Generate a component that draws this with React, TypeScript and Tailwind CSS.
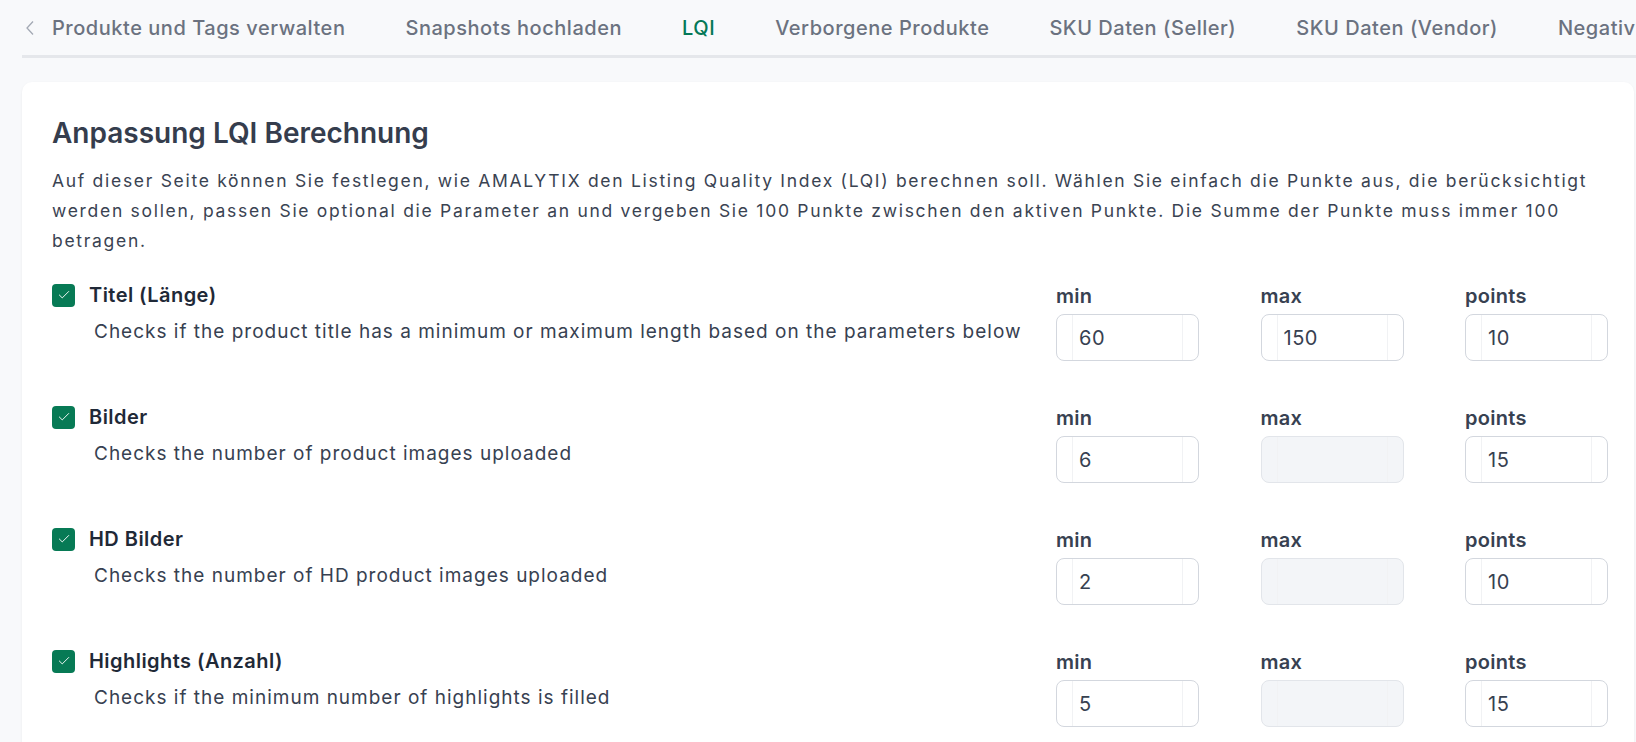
import {Check} from "lucide-react";

const tabs = [
  "Produkte und Tags verwalten",
  "Snapshots hochladen",
  "LQI",
  "Verborgene Produkte",
  "SKU Daten (Seller)",
  "SKU Daten (Vendor)",
  "Negativ Keywords",
];

const rules = [
  {
    title: "Titel (Länge)",
    text: "Checks if the product title has a minimum or maximum length based on the parameters below",
    min: "60",
    max: "150",
    points: "10",
  },
  {title: "Bilder", text: "Checks the number of product images uploaded", min: "6", max: null, points: "15"},
  {title: "HD Bilder", text: "Checks the number of HD product images uploaded", min: "2", max: null, points: "10"},
  {title: "Highlights (Anzahl)", text: "Checks if the minimum number of highlights is filled", min: "5", max: null, points: "15"},
];

const NumberField = ({label, value, disabled}: {label: string; value: string | null; disabled?: boolean}) => {
  return (
    <div className="flex flex-col w-[143px]">
      <p className="text-[20px] leading-[24px] font-semibold tracking-[0.3px] text-[#374151]">{label}</p>
      <div
        className={
          disabled
            ? "mt-[6px] flex h-[47px] rounded-[8px] border border-[#e2e5ea] bg-[#f3f5f8]"
            : "mt-[6px] flex h-[47px] rounded-[8px] border border-[#d3d7de] bg-white"
        }
      >
        <div className="w-[15px]" />
        <div className="flex-1 flex items-center pl-[6px] border-x border-[#f1f2f4] text-[20px] tracking-[0.5px] text-[#374151]">
          {value}
        </div>
        <div className="w-[15px]" />
      </div>
    </div>
  );
};

export default function App() {
  return (
    <div className="min-h-screen bg-[#f8f9fb] font-['Inter',sans-serif] pl-[22px] overflow-hidden">
      <div className="flex h-[58px] border-b-[3px] border-[#e5e7eb] whitespace-nowrap overflow-hidden">
        <div className="flex items-center pl-[4px] pr-[18px] text-[#a3a9b4]">
          <svg width="8" height="14" viewBox="0 0 8 14" fill="none">
            <polyline points="7,0.5 1,7 7,13.5" stroke="currentColor" strokeWidth="1.3" />
          </svg>
        </div>
        <div className="flex gap-[60px]">
          {tabs.map((tab) => (
            <div
              key={tab}
              className={
                tab === "LQI"
                  ? "flex items-center -mb-[3px] border-b-[3px] border-[#047857] text-[20px] tracking-[0.53px] font-medium text-[#047857]"
                  : "flex items-center text-[20px] tracking-[0.53px] font-medium text-[#6b7280]"
              }
            >
              {tab}
            </div>
          ))}
        </div>
      </div>

      <div className="mt-[24px] mr-[2px] bg-white rounded-[10px] shadow-[0_1px_3px_rgba(16,24,40,0.06)] pl-[30px] pr-[26px] pt-[33px] pb-[40px]">
        <h1 className="text-[28px] leading-[36px] font-semibold text-[#353d4d]">Anpassung LQI Berechnung</h1>
        <p className="mt-[15px] -mr-[20px] text-[17.5px] leading-[30px] tracking-[1.7px] text-[#3a4352]">
          Auf dieser Seite können Sie festlegen, wie AMALYTIX den Listing Quality Index (LQI) berechnen soll. Wählen Sie
          einfach die Punkte aus, die berücksichtigt
          <br />
          werden sollen, passen Sie optional die Parameter an und vergeben Sie 100 Punkte zwischen den aktiven Punkte. Die
          Summe der Punkte muss immer 100
          <br />
          betragen.
        </p>

        <div className="mt-[27px] flex flex-col gap-[44px]">
          {rules.map((rule) => (
            <div key={rule.title} className="flex flex-row">
              <div className="flex-1 flex flex-col">
                <div className="flex flex-row items-center gap-[14px] h-[24px]">
                  <div className="flex items-center justify-center w-[23px] h-[23px] rounded-[4px] bg-[#077a55]">
                    <Check size={14} strokeWidth={1.6} className="text-white" />
                  </div>
                  <p className="text-[20px] leading-[24px] font-semibold tracking-[0.45px] text-[#1f2937]">{rule.title}</p>
                </div>
                <p className="mt-[11px] pl-[42px] text-[19px] leading-[28px] tracking-[1px] text-[#374151]">{rule.text}</p>
              </div>
              <div className="flex flex-row gap-[61.5px] pt-[1px]">
                <NumberField label="min" value={rule.min} />
                <NumberField label="max" value={rule.max} disabled={rule.max === null} />
                <NumberField label="points" value={rule.points} />
              </div>
            </div>
          ))}
        </div>
      </div>
    </div>
  );
}
